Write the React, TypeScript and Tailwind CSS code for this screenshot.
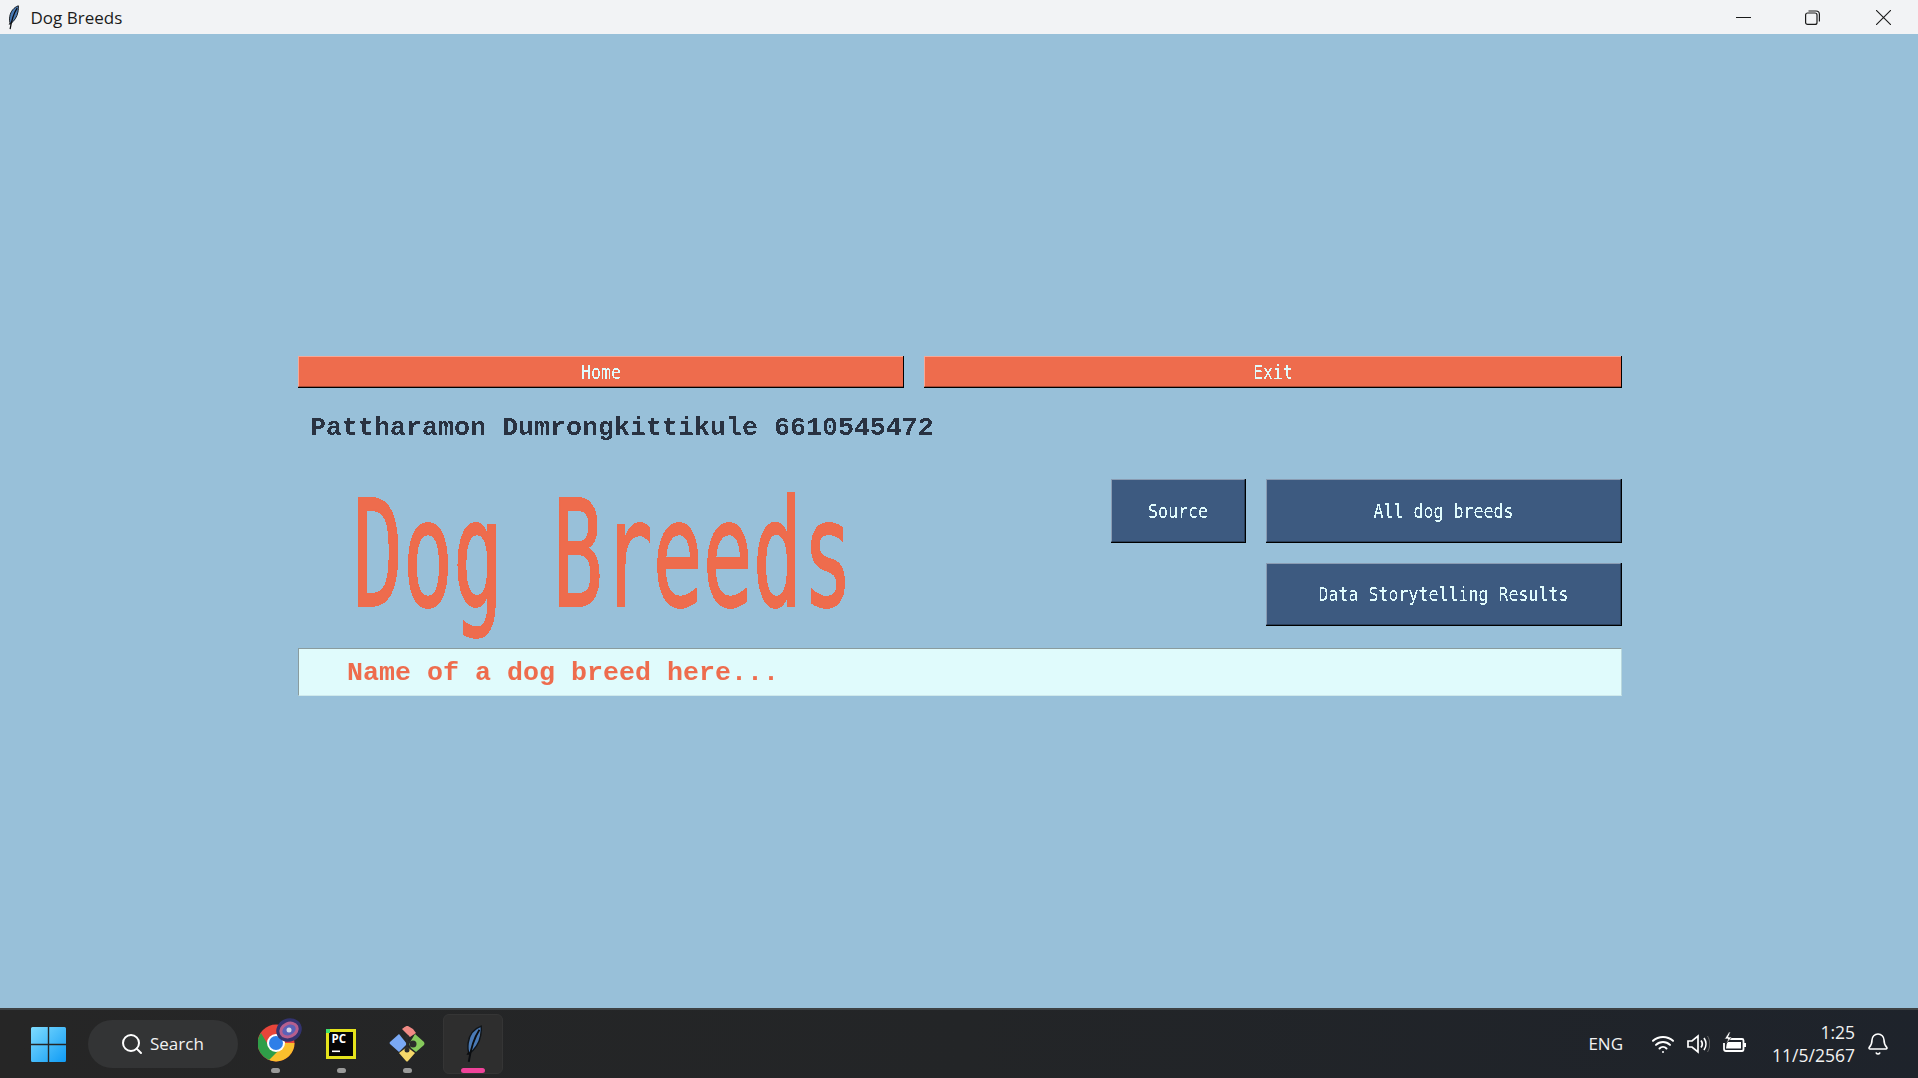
import { Search, Wifi, Bell } from "lucide-react";

function Feather({ size = 30 }: { size?: number }) {
  return (
    <svg width={size * 0.5} height={size} viewBox="0 0 16 32" fill="none">
      <path d="M14.5 1 C9 3 4.5 8 3.5 15 C3 19 3.2 22 4.5 24 C9 21 13 15 14 9 C14.6 6 14.8 3 14.5 1 Z" fill="#4a7ab5" stroke="#101418" strokeWidth="1.2" />
      <path d="M13 4 C9 10 6 18 4 31" stroke="#0b0d10" strokeWidth="1.6" fill="none" />
      <path d="M4 22 L2 25 L5 25 Z" fill="#0b0d10" />
    </svg>
  );
}

function TkButton({ label, color, className }: { label: string; color: "orange" | "blue"; className: string }) {
  const orange = color === "orange";
  return (
    <div className={`flex border-r border-b border-black ${className}`}>
      <div
        className={
          orange
            ? "flex-1 flex items-center justify-center pt-[3px] bg-[#ee6c4d] border-t border-l border-r-0 border-b border-t-[#f7a896] border-l-[#f7a896] border-b-[#a64b36]"
            : "flex-1 flex items-center justify-center pt-[3px] bg-[#3d5a80] border-t border-l border-r border-b border-t-[#8a9cb3] border-l-[#8a9cb3] border-r-[#2a3f59] border-b-[#2a3f59]"
        }
      >
        <span className="inline-block scale-y-[1.22] [font-family:'DejaVu_Sans_Mono',monospace] text-[16.6px] leading-none text-[#e0fbfc] [filter:url(#crisp)]">
          {label}
        </span>
      </div>
    </div>
  );
}

function AppSlot({ children, active, dot }: { children: React.ReactNode; active?: boolean; dot?: boolean }) {
  return (
    <div className="relative w-[66px] h-[60px] flex items-center justify-center">
      {active && <div className="absolute inset-y-0 inset-x-[3px] rounded-md bg-[#2e2e2e] border border-[#353535]" />}
      <div className="relative">{children}</div>
      {dot && <div className="absolute bottom-[1px] left-[29px] w-[9px] h-[5px] rounded-full bg-[#9a9a9a]" />}
      {active && <div className="absolute bottom-[1px] left-[21px] w-[24px] h-[5px] rounded-full bg-[#f0439a]" />}
    </div>
  );
}

export default function App() {
  return (
    <div className="w-[1918px] h-[1078px] flex flex-col overflow-hidden bg-[#98c0d9]">
      <svg width="0" height="0" className="absolute">
        <defs>
          <filter id="crisp" colorInterpolationFilters="sRGB" x="-5%" y="-20%" width="110%" height="140%">
            <feComponentTransfer>
              <feFuncA type="discrete" tableValues="0 0 1 1" />
            </feComponentTransfer>
          </filter>
        </defs>
      </svg>

      {/* Title bar */}
      <div className="h-[34px] shrink-0 bg-[#f2f3f5] flex items-center pl-[7px]">
        <Feather size={25} />
        <span className="ml-[11px] pt-[2px] [font-family:'Open_Sans',sans-serif] text-[17px] text-[#1b1b1b]">Dog Breeds</span>
        <div className="ml-auto flex items-center text-[#1a1a1a]">
          <svg width="15" height="15" viewBox="0 0 15 15" className="mr-[54px]"><path d="M0 7.5H15" stroke="currentColor" strokeWidth="1" /></svg>
          <svg width="15" height="15" viewBox="0 0 15 15" className="mr-[56px]" fill="none" stroke="currentColor" strokeWidth="1.2">
            <rect x="0.6" y="3" width="11.4" height="11.4" rx="2" />
            <path d="M3.5 1 H11 C13 1 14.4 2.4 14.4 4.4 V11.5" />
          </svg>
          <svg width="15" height="15" viewBox="0 0 15 15" className="mr-[27px]" fill="none" stroke="currentColor" strokeWidth="1.1"><path d="M0 0L15 15M15 0L0 15" /></svg>
        </div>
      </div>

      {/* Content */}
      <div className="flex-1 pl-[298px] pt-[322px]">
        <div className="w-[1324px] flex flex-col">
          <div className="flex gap-[20px] h-[32px]">
            <TkButton label="Home" color="orange" className="w-[606px]" />
            <TkButton label="Exit" color="orange" className="w-[698px]" />
          </div>

          <div className="h-[91px] pl-[12px] pt-[22px] [font-family:'Liberation_Mono',monospace] font-bold text-[26.67px] leading-[36px] text-[#293241] whitespace-pre [filter:url(#crisp)]">
            Pattharamon Dumrongkittikule 6610545472
          </div>

          <div className="flex justify-between h-[147px]">
            <div className="pl-[55px] pt-[15px]">
              <span className="inline-block scale-y-[1.78] origin-top [font-family:'DejaVu_Sans_Mono',monospace] text-[83px] leading-[70px] text-[#ee6c4d] whitespace-pre [filter:url(#crisp)] [-webkit-text-stroke:1px_#ee6c4d]">
                Dog Breeds
              </span>
            </div>
            <div className="w-[511px] flex flex-col gap-[20px]">
              <div className="flex gap-[20px]">
                <TkButton label="Source" color="blue" className="w-[135px] h-[64px]" />
                <TkButton label="All dog breeds" color="blue" className="w-[356px] h-[64px]" />
              </div>
              <div className="flex justify-end">
                <TkButton label="Data Storytelling Results" color="blue" className="w-[356px] h-[63px]" />
              </div>
            </div>
          </div>

          <div className="mt-[22px] h-[48px] pt-[2px] bg-[#e0fbfc] border border-t-[#8a9c9e] border-l-[#8a9c9e] border-r-[#b9d8de] border-b-[#cfe9ec] pl-[48px] flex items-center [font-family:'Liberation_Mono',monospace] font-bold text-[26.67px] text-[#ee6c4d] whitespace-pre [filter:url(#crisp)]">
            Name of a dog breed here...
          </div>
        </div>
      </div>

      {/* Taskbar */}
      <div className="h-[70px] shrink-0 border-t-2 border-[#3d4144] bg-gradient-to-r from-[#262626] via-[#232527] to-[#1e232b] flex items-center text-white [font-family:'Open_Sans',sans-serif]">
        <svg width="35" height="35" viewBox="0 0 35 35" className="ml-[31px]">
          <defs>
            <linearGradient id="win" x1="0" y1="0" x2="1" y2="1">
              <stop offset="0" stopColor="#7fdcff" />
              <stop offset="1" stopColor="#0f9bf5" />
            </linearGradient>
          </defs>
          <path d="M1.5 0H16.8V16.8H0V1.5A1.5 1.5 0 0 1 1.5 0Z M18.2 0H33.5A1.5 1.5 0 0 1 35 1.5V16.8H18.2Z M0 18.2H16.8V35H1.5A1.5 1.5 0 0 1 0 33.5Z M18.2 18.2H35V33.5A1.5 1.5 0 0 1 33.5 35H18.2Z" fill="url(#win)" />
        </svg>
        <div className="ml-[22px] w-[150px] h-[48px] rounded-full bg-[#333435] flex items-center pl-[32px]">
          <Search size={24} strokeWidth={2} className="text-white" />
          <span className="ml-[6px] text-[17px] text-[#f2f2f2]">Search</span>
        </div>
        <div className="ml-[4px] flex items-center">
          <AppSlot dot>
            <svg width="46" height="46" viewBox="0 0 46 46" className="translate-x-[6px] -translate-y-[4px]">
              <circle cx="18" cy="26" r="18.500" fill="#e8453a" />
              <path d="M18 44.500 A18.500 18.500 0 0 0 36.500 26 H18 L9 42 A18.500 18.500 0 0 0 18 44.500Z" fill="#fbc02d" />
              <path d="M-0.500 26 A18.500 18.500 0 0 1 3 16 L12 31 L18 26 L21 33 L11 43 A18.500 18.500 0 0 1 -0.500 26Z" fill="#2f9e48" />
              <circle cx="18" cy="26" r="9" fill="#fff" />
              <circle cx="18" cy="26" r="7" fill="#2f7fe8" />
              <ellipse cx="31" cy="13" rx="13" ry="11.500" fill="#33336f" transform="rotate(-25 31 13)" />
              <ellipse cx="31" cy="13" rx="10" ry="8" fill="#b65f8e" transform="rotate(-25 31 13)" />
              <ellipse cx="31" cy="13" rx="7" ry="5" fill="#5a62b8" transform="rotate(-25 31 13)" />
              <circle cx="31" cy="13" r="2.500" fill="#d8d8e8" />
            </svg>
          </AppSlot>
          <AppSlot dot>
            <svg width="30" height="30" viewBox="0 0 30 30">
              <rect width="30" height="30" fill="#e5e31c" />
              <rect x="3" y="3" width="24" height="24" fill="#050505" />
              <rect x="0" y="0" width="4" height="4" fill="#3fe06b" />
              <text x="5.500" y="14" fontSize="11.500" fontWeight="700" fill="#fff" fontFamily="Open Sans, sans-serif">PC</text>
              <rect x="6" y="21.500" width="8" height="1.600" fill="#fff" />
            </svg>
          </AppSlot>
          <AppSlot dot>
            <svg width="36" height="36" viewBox="0 0 36 36">
              <path d="M18 8 L13 3 Q18 -1 19 0 L24 3 L27 7 L21 11 Z" fill="#f08a84" />
              <path d="M10 8 L18 18 L10 26 L1 18 Q0 17 1 16 Z" fill="#7aa9f5" />
              <path d="M26 8 L35 16 Q36 18 35 19 L27 26 L22 22 L20 18 Z" fill="#86c95c" />
              <path d="M10 27 L18 21 L26 27 L19 35 Q18 36 17 35 Z" fill="#f6d86a" />
              <circle cx="18" cy="11" r="2" fill="#2b2b2b" />
              <circle cx="24" cy="18" r="3.500" fill="#2b2b2b" />
              <circle cx="18" cy="24" r="2.500" fill="#2b2b2b" />
              <path d="M18 11V24M18 15L24 18" stroke="#2b2b2b" strokeWidth="1.800" />
            </svg>
          </AppSlot>
          <AppSlot active>
            <Feather size={38} />
          </AppSlot>
        </div>

        <span className="ml-auto text-[17px] text-[#f2f2f2]">ENG</span>
        <Wifi size={24} strokeWidth={2} className="ml-[28px] text-white" />
        <svg width="24" height="24" viewBox="0 0 24 24" fill="none" stroke="#fff" strokeWidth="1.700" className="ml-[11px]">
          <path d="M2 9 V15 H6 L12 20 V4 L6 9 Z" />
          <path d="M15 8.500 C16.500 10.500 16.500 13.500 15 15.500" />
          <path d="M18 6 C20.500 9.500 20.500 14.500 18 18" />
          <path d="M21.500 4 C24.500 9 24.500 15 21.500 20" stroke="#666" strokeWidth="1" />
        </svg>
        <svg width="24" height="24" viewBox="0 0 24 24" fill="none" className="ml-[12px]">
          <path d="M6 7 H20 Q21.500 7 21.500 8.500 V17 Q21.500 19 20 19 H4 Q2 19 2 17 V11" stroke="#fff" strokeWidth="1.800" />
          <path d="M5 10 H19 V16.500 H4 Z" fill="#fff" />
          <rect x="22" y="11" width="2" height="4" fill="#fff" />
          <path d="M7 0 L2.500 7 H6 L4 12 L10 5 H6.500 L8.500 0 Z" fill="#fff" stroke="#20242a" strokeWidth="0.700" />
        </svg>
        <div className="ml-[23px] w-[86px] flex flex-col items-end text-[17.5px] leading-[23px] text-[#f2f2f2]">
          <span>1:25</span>
          <span className="whitespace-nowrap">11/5/2567</span>
        </div>
        <Bell size={24} strokeWidth={1.6} className="ml-[11px] mr-[28px] text-white" />
      </div>
    </div>
  );
}
